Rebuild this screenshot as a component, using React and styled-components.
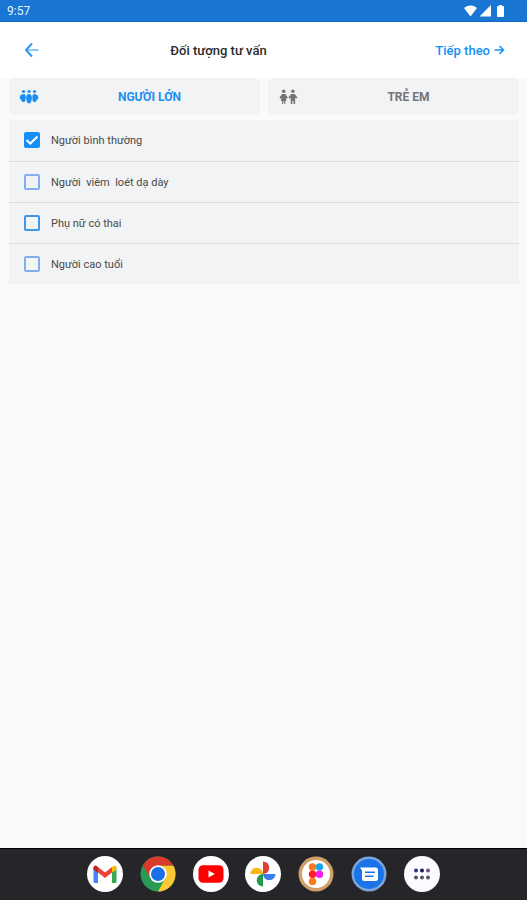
import { useState } from 'react';
import styled, { createGlobalStyle } from 'styled-components'

const GlobalStyle=createGlobalStyle`
*{
box-sizing:border-box;
}
body{
margin:0;
background-color:#fafafa;
font-family:Roboto, "Noto Sans", sans-serif;
}
button{
border:none;
padding:0;
background:none;
font-family:inherit;
cursor:pointer;
}
svg{
display:block;
flex-shrink:0;
}
`;
const Container=styled.div`
display:flex;
flex-direction:column;
min-height:100vh;
`;
const StatusBar=styled.div`
display:flex;
align-items:center;
justify-content:space-between;
height:22px;
padding:0 22px 0 7px;
background-color:#1976d2;
border-bottom:1px solid #1068c0;
color:#e8f1fb;
font-size:12px;
`;
const StatusIcons=styled.div`
display:flex;
align-items:center;
gap:2px;
`;
const Header=styled.header`
display:flex;
align-items:center;
height:56px;
padding:0 22px;
background-color:white;
`;
const BackButton=styled.button`
width:22px;
color:#2f97f2;
`;
const Title=styled.h1`
flex:1;
margin:0;
color:#2b2b2b;
font-size:13px;
font-weight:500;
text-align:center;
`;
const NextButton=styled.button`
display:flex;
align-items:center;
justify-content:flex-end;
gap:3px;
width:112px;
color:#1590f5;
font-size:13px;
font-weight:500;
`;
const Content=styled.main`
flex:1;
padding:0 8px 0 9px;
`;
const Tabs=styled.div`
display:flex;
gap:8px;
margin-bottom:5px;
`;
const Tab=styled.button`
display:flex;
flex:1;
align-items:center;
height:37px;
padding-left:10px;
border-radius:5px;
background-color:#f1f3f4;
color:${(props)=>props.$active ? '#1a8ff2' : '#757575'};
font-size:12px;
font-weight:700;
`;
const TabLabel=styled.span`
flex:1;
text-align:center;
`;
const List=styled.ul`
margin:0;
padding:0;
list-style:none;
background-color:#f1f3f4;
`;
const Row=styled.li`
height:41px;
& + &{
border-top:1px solid #d9dbdc;
}
`;
const RowLabel=styled.label`
display:flex;
align-items:center;
gap:11px;
height:40px;
padding-left:15px;
color:#4a4a4a;
font-size:11px;
white-space:pre;
cursor:pointer;
`;
const CheckWrap=styled.span`
display:grid;
width:16px;
height:16px;
& > *{
grid-area:1 / 1;
}
`;
const CheckBox=styled.input`
appearance:none;
width:16px;
height:16px;
margin:0;
border:2px solid ${(props)=>props.$strong ? '#3d96e6' : '#82aef0'};
border-radius:2px;
&:checked{
border-color:#148ff5;
background-color:#148ff5;
}
`;
const CheckMark=styled.svg`
pointer-events:none;
z-index:1;
`;
const Dock=styled.nav`
display:flex;
align-items:center;
justify-content:center;
height:52px;
padding-bottom:2px;
border-top:1px solid black;
background-color:#25252a;
`;
const DockItems=styled.div`
display:flex;
flex:1;
justify-content:space-between;
max-width:353px;
`;
const DockButton=styled.button`
width:36px;
height:36px;
border-radius:50%;
`;

const BackIcon=()=>(
  <svg width="18" height="18" viewBox="0 0 18 18" fill="none" stroke="currentColor" strokeWidth="2">
    <path d="M10 2.5L4 9L10 15.5" />
    <path d="M4 9H16.5" strokeWidth="1.5" opacity="0.7" />
  </svg>
)

const NextIcon=()=>(
  <svg width="12" height="12" viewBox="0 0 12 12" fill="none" stroke="currentColor" strokeWidth="1.5">
    <path d="M1.5 6H10M6.5 2L10.5 6L6.5 10" />
  </svg>
)

const AdultsIcon=()=>(
  <svg width="20" height="16" viewBox="0 0 20 16" fill="currentColor">
    <circle cx="4.5" cy="2.5" r="1.6" />
    <circle cx="10" cy="2.5" r="1.6" />
    <circle cx="15.5" cy="2.5" r="1.6" />
    <path d="M3 5.2H6L6.6 7V11L5.5 13H3.5L2.3 11.3L0.5 9L1.3 6.5Z" />
    <path d="M17 5.2H14L13.4 7V11L14.5 13H16.5L17.7 11.3L19.5 9L18.7 6.5Z" />
    <path d="M8.4 5.2H11.6L13 8L12.4 12L11.3 14.2H8.7L7.6 12L7 8Z" />
  </svg>
)

const ChildrenIcon=()=>(
  <svg width="20" height="16" viewBox="0 0 20 16" fill="currentColor">
    <circle cx="5.7" cy="2.3" r="1.8" />
    <circle cx="14.9" cy="2.3" r="1.8" />
    <path d="M4 5H7.3L9.8 8.5L8.8 9.8L7.9 9L8.5 12H7.3V15H6.2V12.5H5.2V15H4.1V12H2.8L3.6 9L2.5 9.8L1.5 8.5Z" />
    <path d="M13.1 5H16.7L19.4 8.5L18.3 9.8L17.1 8.7V15H15.5V12H14.3V15H12.7V8.7L11.5 9.8L10.5 8.5Z" />
  </svg>
)

const GmailIcon=()=>(
  <svg width="36" height="36" viewBox="0 0 36 36">
    <circle cx="18" cy="18" r="18" fill="white" />
    <path d="M6.5 11.5L11 14.5V27H7.8Q6.5 27 6.5 25.7Z" fill="#4285f4" />
    <path d="M29.5 11.5L25 14.5V27H28.2Q29.5 27 29.5 25.7Z" fill="#34a853" />
    <path d="M11 11L18 16.5L25 11V16.5L18 22L11 16.5Z" fill="#ea4335" />
    <path d="M6.5 13V11.5Q6.5 9.5 8.5 9.5Q9.5 9.5 11 11V16.8L6.5 13.4Z" fill="#c5221f" />
    <path d="M29.5 13V11.5Q29.5 9.5 27.5 9.5Q26.5 9.5 25 11V16.8L29.5 13.4Z" fill="#fbbc04" />
  </svg>
)

const ChromeIcon=()=>(
  <svg width="36" height="36" viewBox="0 0 36 36">
    <circle cx="18" cy="18" r="17.5" fill="#269b51" />
    <path d="M18 18V9.5H33.3A17.5 17.5 0 0 1 18 35.5L25.4 22.3Z" fill="#fcc934" />
    <path d="M2.8 9.3A17.5 17.5 0 0 1 33.2 9.5H18L10.6 22.3Z" fill="#d93a2c" />
    <circle cx="18" cy="18" r="8.7" fill="white" />
    <circle cx="18" cy="18" r="7" fill="#1a6fe8" />
  </svg>
)

const YoutubeIcon=()=>(
  <svg width="36" height="36" viewBox="0 0 36 36">
    <circle cx="18" cy="18" r="18" fill="white" />
    <rect x="5.5" y="9.3" width="25" height="17.4" rx="4.5" fill="#ff0000" />
    <path d="M15.5 14.4L21.8 18L15.5 21.6Z" fill="white" />
  </svg>
)

const PhotosIcon=()=>(
  <svg width="36" height="36" viewBox="0 0 36 36">
    <circle cx="18" cy="18" r="18" fill="white" />
    <path d="M18 18V5.5A6.25 6.25 0 0 1 18 18Z" fill="#e53d30" />
    <path d="M18 18H30.5A6.25 6.25 0 0 1 18 18Z" fill="#3b7ded" />
    <path d="M18 18V30.5A6.25 6.25 0 0 1 18 18Z" fill="#209a4c" />
    <path d="M18 18H5.5A6.25 6.25 0 0 1 18 18Z" fill="#fbb515" />
  </svg>
)

const FigmaIcon=()=>(
  <svg width="36" height="36" viewBox="0 0 36 36">
    <circle cx="18" cy="18" r="17.5" fill="#d0a067" />
    <circle cx="18" cy="18" r="14" fill="white" />
    <circle cx="14.5" cy="11" r="3.7" fill="#ff7a18" />
    <circle cx="21.5" cy="11" r="3.7" fill="#1aa5e8" />
    <circle cx="14.5" cy="18.2" r="3.7" fill="#ff1d25" />
    <circle cx="21.5" cy="18.2" r="3.7" fill="#f71be8" />
    <circle cx="14.5" cy="25.4" r="3.7" fill="#ff7a18" />
  </svg>
)

const MessagesIcon=()=>(
  <svg width="36" height="36" viewBox="0 0 36 36">
    <circle cx="18" cy="18" r="17.5" fill="#7da6d8" />
    <circle cx="18" cy="18" r="15" fill="#1a73e8" />
    <path d="M9 11.5H24.5Q27 11.5 27 14V22.5Q27 25 24.5 25H13.5Q11 25 11 22.5V14.5Z" fill="white" />
    <path d="M14 16.2H24M14 20.2H22.5" stroke="#1a73e8" strokeWidth="1.6" />
  </svg>
)

const AppsIcon=()=>(
  <svg width="36" height="36" viewBox="0 0 36 36">
    <circle cx="18" cy="18" r="18" fill="#fbfbff" />
    <circle cx="12" cy="14.5" r="2" fill="#32327c" />
    <circle cx="18" cy="14.5" r="2" fill="#181878" />
    <circle cx="24" cy="14.5" r="2" fill="#70507c" />
    <circle cx="12" cy="21.5" r="2" fill="#5c5264" />
    <circle cx="18" cy="21.5" r="2" fill="#5c5264" />
    <circle cx="24" cy="21.5" r="2" fill="#5c5264" />
  </svg>
)

const groups=[
  { id:"normal", text:"Người bình thường" },
  { id:"ulcer", text:"Người  viêm  loét dạ dày" },
  { id:"pregnant", text:"Phụ nữ có thai", strong:true },
  { id:"elderly", text:"Người cao tuổi" },
]

const dockApps=[
  { name:"Gmail", Icon:GmailIcon },
  { name:"Chrome", Icon:ChromeIcon },
  { name:"YouTube", Icon:YoutubeIcon },
  { name:"Photos", Icon:PhotosIcon },
  { name:"Figma", Icon:FigmaIcon },
  { name:"Messages", Icon:MessagesIcon },
  { name:"Apps", Icon:AppsIcon },
]


function App() {

  const[tab,setTab]=useState("adult");
  const[selected,setSelected]=useState(["normal"]);

  const onToggle=(id)=>{
    setSelected(selected.includes(id) ? selected.filter((s)=>s!==id) : [...selected,id])
  }

  return (
    <>
    <GlobalStyle/>
    <Container>
      <StatusBar>
        <span>9:57</span>
        <StatusIcons>
          <svg width="13" height="12" viewBox="0 0 13 12" fill="white">
            <path d="M0 3Q6.5 -1.8 13 3L6.5 11.5Z" />
          </svg>
          <svg width="12" height="12" viewBox="0 0 12 12" fill="white">
            <path d="M12 0V11.5H0.5Z" />
          </svg>
          <svg width="12" height="12" viewBox="0 0 12 12" fill="white">
            <path d="M5 1H6V0H9V1H10Q11 1 11 2V11Q11 12 10 12H5Q4 12 4 11V2Q4 1 5 1Z" />
          </svg>
        </StatusIcons>
      </StatusBar>

      <Header>
        <BackButton aria-label="Quay lại"><BackIcon/></BackButton>
        <Title>Đối tượng tư vấn</Title>
        <NextButton>Tiếp theo <NextIcon/></NextButton>
      </Header>

      <Content>
        <Tabs>
          <Tab $active={tab==="adult"} onClick={()=>setTab("adult")}>
            <AdultsIcon/>
            <TabLabel>NGƯỜI LỚN</TabLabel>
          </Tab>
          <Tab $active={tab==="child"} onClick={()=>setTab("child")}>
            <ChildrenIcon/>
            <TabLabel>TRẺ EM</TabLabel>
          </Tab>
        </Tabs>

        <List>
          {groups.map((group)=>(
            <Row key={group.id}>
              <RowLabel htmlFor={group.id}>
                <CheckWrap>
                  <CheckBox
                    type="checkbox"
                    id={group.id}
                    $strong={group.strong}
                    checked={selected.includes(group.id)}
                    onChange={()=>onToggle(group.id)}
                  />
                  {selected.includes(group.id) && (
                    <CheckMark width="16" height="16" viewBox="0 0 16 16" fill="none" stroke="white" strokeWidth="2">
                      <path d="M2.5 8L6.3 11.5L13.5 4.5" />
                    </CheckMark>
                  )}
                </CheckWrap>
                {group.text}
              </RowLabel>
            </Row>
          ))}
        </List>
      </Content>

      <Dock>
        <DockItems>
          {dockApps.map(({ name, Icon })=>(
            <DockButton key={name} aria-label={name}><Icon/></DockButton>
          ))}
        </DockItems>
      </Dock>
    </Container>
    </>
  );
}

export default App;
